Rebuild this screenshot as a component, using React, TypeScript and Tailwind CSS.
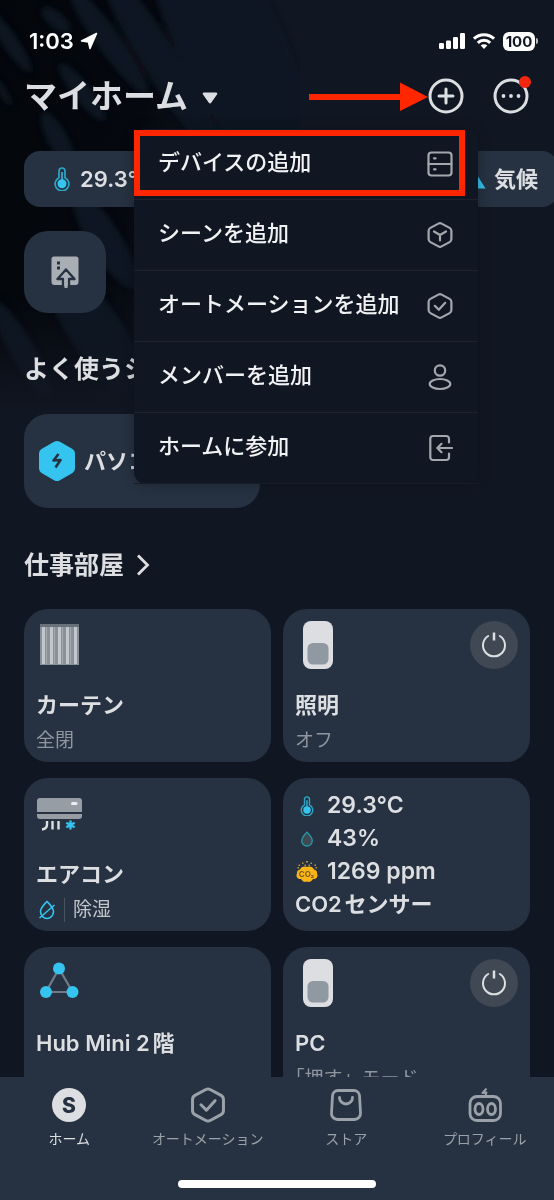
import React from 'react';

type IconProps = { className?: string };

const HEXAGON = 'M12.4 2.6a3.4 3.4 0 0 1 3.2 0l8 4.3a3.4 3.4 0 0 1 1.8 3v8.2a3.4 3.4 0 0 1-1.8 3l-8 4.3a3.4 3.4 0 0 1-3.2 0l-8-4.3a3.4 3.4 0 0 1-1.8-3V9.9a3.4 3.4 0 0 1 1.8-3z';

const LineIcon: React.FC<{ className?: string; children: React.ReactNode }> = ({ className, children }) => (
  <svg
    viewBox="0 0 28 28"
    className={className ?? 'size-7'}
    fill="none"
    stroke="currentColor"
    strokeWidth="2.2"
    strokeLinecap="round"
    strokeLinejoin="round"
    aria-hidden="true"
  >
    {children}
  </svg>
);

const DeviceIcon = () => (
  <LineIcon>
    <rect x="2.5" y="2.5" width="23" height="23" rx="3" />
    <path d="M2.5 14h23M8 8.3h1.6M8 19.3h1.6" />
  </LineIcon>
);

const SceneIcon = () => (
  <LineIcon>
    <path d={HEXAGON} />
    <path d="M8 10.5l6 3.5 6-3.5M14 14v5.5" />
  </LineIcon>
);

const AutomationIcon = ({ className }: IconProps) => (
  <LineIcon className={className}>
    <path d={HEXAGON} />
    <path d="M8.8 13.8l4 4 6.4-7" />
  </LineIcon>
);

const MemberIcon = () => (
  <LineIcon>
    <circle cx="14" cy="7.5" r="5.2" />
    <ellipse cx="14" cy="21" rx="10.3" ry="5" />
  </LineIcon>
);

const JoinIcon = () => (
  <LineIcon>
    <path d="M23 8.5V4.7A2.7 2.7 0 0 0 20.3 2H7a2.7 2.7 0 0 0-2.7 2.7v18.6A2.7 2.7 0 0 0 7 26h13.3a2.7 2.7 0 0 0 2.7-2.7v-3.8" />
    <path d="M26 14H12M15.5 9.8L11.3 14l4.2 4.2" />
  </LineIcon>
);

const ThermometerIcon = ({ className }: IconProps) => (
  <svg viewBox="0 0 16 24" className={className} aria-hidden="true">
    <path
      d="M5 4a3 3 0 0 1 6 0v6.7a6.9 6.9 0 1 1-6 0z"
      fill="none"
      stroke="#2ba7c8"
      strokeWidth="1.7"
    />
    <circle cx="8" cy="16.8" r="4.5" fill="#35c3ef" />
    <path d="M8 5v10" stroke="#35c3ef" strokeWidth="1.5" />
  </svg>
);

const DropIcon = ({ className }: IconProps) => (
  <svg viewBox="0 0 16 20" className={className} aria-hidden="true">
    <path d="M8 2.2c3 3.3 6 6.3 6 9.8a6 6 0 0 1-12 0c0-3.5 3-6.5 6-9.8z" fill="#3f4750" stroke="#2a94a6" strokeWidth="1.6" />
  </svg>
);

const Co2Icon = ({ className }: IconProps) => (
  <svg viewBox="0 0 24 24" className={className} aria-hidden="true">
    <g fill="#b9933a">
      <rect x="11" y="1" width="2" height="1.5" />
      <rect x="7" y="2.5" width="1.5" height="1.5" />
      <rect x="15.5" y="2.5" width="1.5" height="1.5" />
      <rect x="3.5" y="4.5" width="1.5" height="1.5" />
      <rect x="9.5" y="4.5" width="1.5" height="1.5" />
      <rect x="13.5" y="4.5" width="1.5" height="1.5" />
      <rect x="19.5" y="4.5" width="1.5" height="1.5" />
      <rect x="2.5" y="7" width="1.5" height="1.5" />
      <rect x="20.5" y="7" width="1.5" height="1.5" />
    </g>
    <path
      d="M5 9.5C6 7 9 6 12 7c3-1 6 0 7 2.5 2 .5 3.5 2 3 4 1.5 3-.5 6-4 5.5-1.5 2.5-4 3.5-6 2.5-2 1-4.5 0-6-2.5-3.5.5-5.5-2.5-4-5.5-.5-2 1-3.5 3-4z"
      fill="#f9b417"
    />
    <text x="11.5" y="17" textAnchor="middle" fontSize="8" fontWeight="700" fill="#7a5c1c">
      CO₂
    </text>
  </svg>
);

const CurtainIcon = () => (
  <svg viewBox="0 0 40 44" className="ml-1 h-11 w-10" aria-hidden="true">
    <rect y="1" width="39" height="3" fill="#68717a" />
    <rect y="4" width="39" height="38" fill="#88909a" />
    {[2, 10, 18, 26, 34].map((x) => (
      <rect key={x} x={x} y="4" width="3" height="37" fill="#c3c7cc" />
    ))}
    {[6, 14, 22, 30].map((x) => (
      <rect key={x} x={x} y="4" width="1" height="37" fill="#a4aab1" />
    ))}
  </svg>
);

const SwitchIcon = () => (
  <svg viewBox="0 0 30 48" className="ml-2 h-12 w-[30px]" aria-hidden="true">
    <rect width="30" height="48" rx="8" fill="#dcdee1" />
    <rect x="4.5" y="22" width="21" height="21.5" rx="5.5" fill="#9098a1" />
  </svg>
);

const AirConIcon = () => (
  <svg viewBox="0 0 46 40" className="h-10 w-[46px]" aria-hidden="true">
    <path d="M4 4h39a3 3 0 0 1 3 3v11H1V7a3 3 0 0 1 3-3z" fill="#969da5" />
    <path d="M1 20h45v2a3 3 0 0 1-3 3H4a3 3 0 0 1-3-3z" fill="#969da5" />
    <rect x="35" y="8" width="6.5" height="3" rx="1.5" fill="#eceef0" />
    <path d="M11 27v3.5c0 2.5-1.5 4.5-5 5M16.5 27v8.5M22.5 27v8.5" fill="none" stroke="#dcdee1" strokeWidth="2.4" />
    <path d="M34.5 26.5v9M30.3 28.7l8.4 4.6M30.3 33.3l8.4-4.6" stroke="#35c3ef" strokeWidth="2.4" />
  </svg>
);

const HubIcon = () => (
  <svg viewBox="0 0 40 40" className="mb-2 ml-1 size-10" aria-hidden="true">
    <path d="M19 9.5L6 33h26.5z" fill="none" stroke="#727b84" strokeWidth="2.2" />
    <g fill="#35c3ef">
      <circle cx="19" cy="9.5" r="6" />
      <circle cx="6" cy="33" r="6" />
      <circle cx="32.5" cy="33" r="6" />
    </g>
  </svg>
);

const DryIcon = () => (
  <svg viewBox="0 0 18 22" className="ml-0.5 h-[22px] w-[18px]" fill="none" stroke="#35c3ef" strokeWidth="1.6" aria-hidden="true">
    <path d="M9 2.5c3 3 6.5 6.2 6.5 10a6.5 7 0 0 1-13 0c0-3.8 3.5-7 6.5-10z" />
    <path d="M1.5 19L16.5 6" />
  </svg>
);

// Frond shadows behind the top left of the screen
const Backdrop = () => (
  <svg viewBox="0 0 300 420" className="pointer-events-none absolute left-0 top-0 h-[420px] w-[300px]" aria-hidden="true">
    <defs>
      <linearGradient id="shade" x1="0" y1="0" x2="1" y2="0.3">
        <stop offset="0" stopColor="#03060a" />
        <stop offset="0.5" stopColor="#05080e" />
        <stop offset="0.8" stopColor="#111722" />
      </linearGradient>
      <linearGradient id="fade" x1="0" y1="0" x2="0" y2="1">
        <stop offset="0.7" stopColor="#111722" stopOpacity="0" />
        <stop offset="0.98" stopColor="#111722" />
      </linearGradient>
      <filter id="soft">
        <feGaussianBlur stdDeviation="3" />
      </filter>
    </defs>
    <rect width="300" height="420" fill="url(#shade)" />
    <g fill="#111722" filter="url(#soft)">
      <ellipse cx="10" cy="42" rx="8" ry="36" transform="rotate(-34 10 42)" />
      <ellipse cx="56" cy="20" rx="8" ry="18" transform="rotate(-50 56 20)" />
      <ellipse cx="108" cy="40" rx="12" ry="66" transform="rotate(-36 108 40)" />
      <ellipse cx="160" cy="60" rx="18" ry="110" transform="rotate(-32 160 60)" />
      <ellipse cx="215" cy="60" rx="30" ry="130" transform="rotate(-28 215 60)" />
      <ellipse cx="265" cy="80" rx="34" ry="150" transform="rotate(-20 265 80)" />
      <ellipse cx="82" cy="92" rx="9" ry="36" transform="rotate(-38 82 92)" />
      <ellipse cx="58" cy="140" rx="10" ry="32" transform="rotate(-28 58 140)" />
      <ellipse cx="3" cy="92" rx="4" ry="16" transform="rotate(-30 3 92)" />
      <ellipse cx="105" cy="240" rx="16" ry="56" transform="rotate(-32 105 240)" />
      <ellipse cx="95" cy="330" rx="26" ry="80" transform="rotate(-34 95 330)" />
      <ellipse cx="22" cy="350" rx="12" ry="56" transform="rotate(-30 22 350)" />
    </g>
    <rect width="300" height="420" fill="url(#fade)" />
  </svg>
);

const StatusBar = () => (
  <div className="flex h-[66px] shrink-0 items-center pl-[29px] pr-4 pt-4 text-white">
    <span className="text-[22px] font-semibold leading-7">1:03</span>
    <svg
      viewBox="0 0 18 18"
      className="ml-1.5 size-[18px]"
      fill="currentColor"
      stroke="currentColor"
      strokeWidth="1.6"
      strokeLinejoin="round"
      aria-hidden="true"
    >
      <path d="M16.5 1.5L1.500 9l7 1 1.500 6.500z" />
    </svg>
    <div className="ml-auto flex items-center gap-2">
      <svg viewBox="0 0 26 16" className="h-4 w-[26px]" fill="currentColor" aria-hidden="true">
        <rect y="10" width="5" height="6" rx="1.3" />
        <rect x="7" y="7.5" width="5" height="8.5" rx="1.3" />
        <rect x="14" y="4" width="5" height="12" rx="1.3" />
        <rect x="21" width="5" height="16" rx="1.3" />
      </svg>
      <svg viewBox="0 0 22 16" className="h-4 w-[22px]" fill="none" stroke="currentColor" strokeWidth="3" aria-hidden="true">
        <path d="M1 5.7a14.5 14.5 0 0 1 20 0" />
        <path d="M4.8 9.8a9 9 0 0 1 12.4 0" />
        <path d="M11 16l-3.300-3.400a4.700 4.700 0 0 1 6.600 0z" fill="currentColor" stroke="none" />
      </svg>
      <div className="flex items-center gap-px">
        <span className="flex h-[19px] w-8 items-center justify-center rounded-md bg-white text-[15px] font-bold leading-none text-[#111722]">
          100
        </span>
        <span className="h-1.5 w-0.5 rounded-r-full bg-white/70"></span>
      </div>
    </div>
  </div>
);

const menuItems = [
  { label: 'デバイスの追加', icon: <DeviceIcon />, marked: true },
  { label: 'シーンを追加', icon: <SceneIcon /> },
  { label: 'オートメーションを追加', icon: <AutomationIcon /> },
  { label: 'メンバーを追加', icon: <MemberIcon /> },
  { label: 'ホームに参加', icon: <JoinIcon /> },
];

const AddMenu = () => (
  <ul className="absolute right-[76px] top-full z-10 mt-[3px] w-[344px] rounded-xl bg-[#111722] shadow-[0_0_12px_rgba(10,14,22,0.4)]">
    {menuItems.map((item) => (
      <li key={item.label} className="relative border-b border-[#1d222d] last:border-[#171d28]">
        <button className="flex h-[70px] w-full items-center justify-between px-6 text-[22px] font-medium text-[#f1f2f4]">
          <span className="pb-1">{item.label}</span>
          <span className="text-[#a3a8af]">{item.icon}</span>
        </button>
        {item.marked && (
          <div className="pointer-events-none absolute bottom-[3px] left-0 right-[13px] top-px border-6 border-[#ff2600]"></div>
        )}
      </li>
    ))}
  </ul>
);

const Header = () => (
  <header className="relative z-10 flex h-[60px] shrink-0 items-center pl-6 pr-[25px]">
    <button className="flex items-center gap-3.5">
      <h1 className="text-[33px] font-semibold leading-10">マイホーム</h1>
      <svg viewBox="0 0 16 12" className="mt-1 h-3 w-4" aria-hidden="true">
        <path d="M2 .5h12c1.2 0 1.7 1 1 1.9l-5.8 8.3c-.6.9-1.8.9-2.4 0L1 2.4C.3 1.500.8.5 2 .5z" fill="currentColor" />
      </svg>
    </button>
    <svg viewBox="0 0 120 30" className="ml-auto h-[30px] w-[120px]" fill="#ff2600" aria-hidden="true">
      <rect x="1" y="13" width="94" height="6" />
      <path d="M92 1.5L120 16 92 30z" />
    </svg>
    <button aria-label="追加" aria-expanded="true">
      <svg viewBox="0 0 36 36" className="size-9" fill="none" stroke="currentColor" strokeWidth="3" strokeLinecap="round" aria-hidden="true">
        <circle cx="18" cy="18" r="16" />
        <path d="M18 11v14M11 18h14" />
      </svg>
    </button>
    <button className="relative ml-[29px]" aria-label="その他">
      <svg viewBox="0 0 36 36" className="size-9" aria-hidden="true">
        <circle cx="18" cy="18" r="16" fill="none" stroke="currentColor" strokeWidth="3" />
        <g fill="currentColor">
          <circle cx="10.5" cy="18" r="1.9" />
          <circle cx="18" cy="18" r="1.9" />
          <circle cx="25.5" cy="18" r="1.9" />
        </g>
      </svg>
      <span className="absolute -right-0.5 -top-0.5 size-3 rounded-full bg-[#f4260f]"></span>
    </button>
    <AddMenu />
  </header>
);

interface DeviceCardProps {
  icon: React.ReactNode;
  name: string;
  status?: React.ReactNode;
  power?: boolean;
}

const DeviceCard: React.FC<DeviceCardProps> = ({ icon, name, status, power }) => (
  <article className="h-[153px] rounded-3xl bg-[#263241] p-3">
    <div className="flex h-12 items-center justify-between">
      {icon}
      {power && (
        <button className="flex size-12 items-center justify-center rounded-full bg-[#3f4853]" aria-label={`${name}の電源`}>
          <svg viewBox="0 0 28 28" className="size-7" fill="none" stroke="currentColor" strokeWidth="2" aria-hidden="true">
            <path d="M8.2 5a11 11 0 1 0 11.6 0" strokeLinecap="round" />
            <path d="M14 1.5v8" strokeWidth="2.5" />
          </svg>
        </button>
      )}
    </div>
    <h3 className="mt-[22px] text-[22px] font-semibold leading-7">{name}</h3>
    <div className="mt-2 text-[19px] leading-7 text-[#8f969e] [text-spacing-trim:trim-start]">{status}</div>
  </article>
);

const SensorCard = () => {
  const readings = [
    { value: '29.3°C', icon: <ThermometerIcon className="h-5 w-3.5" /> },
    { value: '43%', icon: <DropIcon className="h-[18px] w-3.5" /> },
    { value: '1269 ppm', icon: <Co2Icon className="size-6" /> },
  ];

  return (
    <article className="h-[153px] rounded-3xl bg-[#263241] px-3 pt-[11px] text-[23px] font-semibold leading-[33px]">
      {readings.map((reading) => (
        <div key={reading.value} className="flex items-center gap-2">
          <span className="flex w-6 justify-center">{reading.icon}</span>
          {reading.value}
        </div>
      ))}
      <h3 className="text-[22px]">CO2センサー</h3>
    </article>
  );
};

const tabs = [
  {
    label: 'ホーム',
    active: true,
    icon: (
      <svg viewBox="0 0 34 34" className="size-[34px]" aria-hidden="true">
        <circle cx="17" cy="17" r="17" fill="currentColor" />
        <text x="17" y="24.5" textAnchor="middle" fontSize="21" fontWeight="800" fill="#263241">
          S
        </text>
      </svg>
    ),
  },
  { label: 'オートメーション', icon: <AutomationIcon className="size-[38px]" /> },
  {
    label: 'ストア',
    icon: (
      <svg viewBox="0 0 34 34" className="size-[34px]" fill="none" stroke="currentColor" strokeWidth="2.8" strokeLinecap="round" aria-hidden="true">
        <path d="M9 2.5h16a5.5 5.5 0 0 1 5.5 5.1l1 17.4a6 6 0 0 1-6 6.5h-17a6 6 0 0 1-6-6.5l1-17.4A5.5 5.5 0 0 1 9 2.5z" />
        <path d="M10.5 9.5a6.5 6.5 0 0 0 13 0" />
      </svg>
    ),
  },
  {
    label: 'プロフィール',
    icon: (
      <svg viewBox="0 0 34 34" className="size-[34px]" fill="none" stroke="currentColor" strokeWidth="2.8" strokeLinejoin="round" aria-hidden="true">
        <rect x="2" y="8.5" width="30.5" height="24" rx="7" />
        <ellipse cx="11" cy="21" rx="4" ry="5.5" />
        <ellipse cx="23.5" cy="21" rx="4" ry="5.5" />
        <path d="M18.5.5l-4 4.500 4-.5-1.500 4" strokeWidth="2" />
      </svg>
    ),
  },
];

const TabBar = () => (
  <nav className="relative shrink-0 bg-[#263241] pb-3 pt-2.5">
    <ul className="grid grid-cols-4">
      {tabs.map((tab) => (
        <li key={tab.label}>
          <a href="#" className={`flex flex-col items-center gap-1 ${tab.active ? 'text-[#dcdee1]' : 'text-[#9ba1a8]'}`}>
            <span className="flex h-9 items-center">{tab.icon}</span>
            <span className="whitespace-nowrap text-sm leading-6">{tab.label}</span>
          </a>
        </li>
      ))}
    </ul>
    <div className="mx-auto mt-[29px] h-2 w-[198px] rounded-full bg-white"></div>
  </nav>
);

export default function App() {
  return (
    <div className="relative flex h-screen flex-col overflow-hidden bg-[#111722] font-[Inter,'Noto_Sans_CJK_JP',sans-serif] text-[#dcdee1] [text-autospace:normal]">
      <Backdrop />
      <div className="relative z-10">
        <StatusBar />
        <Header />
      </div>

      <main className="relative min-h-0 flex-1 overflow-hidden px-6 pt-[25px]">
        {/* Climate summary */}
        <div className="flex h-14 justify-between text-[22px] font-semibold">
          <div className="flex items-center gap-2.5 rounded-2xl bg-[#263241] pl-[30px] pr-6">
            <ThermometerIcon className="h-6 w-4" />
            29.3°C
          </div>
          <div className="-mr-7 flex items-center gap-2 rounded-2xl bg-[#263241] pl-6 pr-5">
            <svg viewBox="0 0 24 20" className="h-5 w-6" aria-hidden="true">
              <path d="M12 1l11.5 18.5H.5z" fill="#35c3ef" />
            </svg>
            気候
          </div>
        </div>

        <button className="mt-6 flex size-[82px] items-center justify-center rounded-3xl bg-[#263241]" aria-label="アップロード">
          <svg viewBox="0 0 28 34" className="h-[34px] w-7" aria-hidden="true">
            <path d="M3 1.5h22a2.5 2.5 0 0 1 2.5 2.5v23a3 3 0 0 1-3 3H3.5a3 3 0 0 1-3-3V4A2.5 2.5 0 0 1 3 1.5z" fill="#a9aeb4" />
            <path d="M6 6.5h3v3H6zM6 11.5h3v3H6z" fill="#263241" />
            <path
              d="M15 14.5L23.5 24h-5.5v8.5h-6V24H6.5z"
              fill="#a9aeb4"
              stroke="#263241"
              strokeWidth="2.4"
              strokeLinejoin="round"
            />
            <path d="M13.5 24h3v9h-3z" fill="#a9aeb4" />
          </svg>
        </button>

        {/* Favourite scenes */}
        <h2 className="mt-[38px] text-[25px] font-semibold leading-9">よく使うシーン</h2>
        <button className="mt-[27px] flex h-[94px] w-[236px] items-center gap-2 rounded-3xl bg-[#263241] pl-3.5 text-[22px] font-semibold">
          <svg viewBox="0 0 38 42" className="h-[42px] w-[38px]" aria-hidden="true">
            <path
              d="M16.5 1.6a5 5 0 0 1 5 0l13 7.5a5 5 0 0 1 2.5 4.3v15.2a5 5 0 0 1-2.5 4.3l-13 7.5a5 5 0 0 1-5 0l-13-7.5A5 5 0 0 1 1 28.6V13.4a5 5 0 0 1 2.5-4.3z"
              fill="#35c3ef"
            />
            <path d="M20.5 14l-5 6.5 7-.5-5 7.5" fill="none" stroke="#263241" strokeWidth="2.6" strokeLinejoin="round" />
          </svg>
          パソコン
        </button>

        {/* Room */}
        <h2 className="mt-[39px] flex items-center gap-3 text-[25px] font-semibold leading-9">
          仕事部屋
          <svg viewBox="0 0 14 22" className="h-[22px] w-3.5" fill="none" stroke="currentColor" strokeWidth="2.8" aria-hidden="true">
            <path d="M2 1.5l9.5 9.5L2 20.5" />
          </svg>
        </h2>
        <div className="mt-[26px] grid grid-cols-2 gap-x-3 gap-y-4">
          <DeviceCard icon={<CurtainIcon />} name="カーテン" status="全閉" />
          <DeviceCard icon={<SwitchIcon />} name="照明" status="オフ" power />
          <DeviceCard
            icon={<AirConIcon />}
            name="エアコン"
            status={
              <span className="flex items-center gap-2 text-[#c3c7cc]">
                <DryIcon />
                <span className="h-6 w-px bg-[#4a545f]"></span>
                除湿
              </span>
            }
          />
          <SensorCard />
          <DeviceCard icon={<HubIcon />} name="Hub Mini 2階" />
          <DeviceCard icon={<SwitchIcon />} name="PC" status="「押す」モード" power />
        </div>
      </main>

      <TabBar />
    </div>
  );
}
